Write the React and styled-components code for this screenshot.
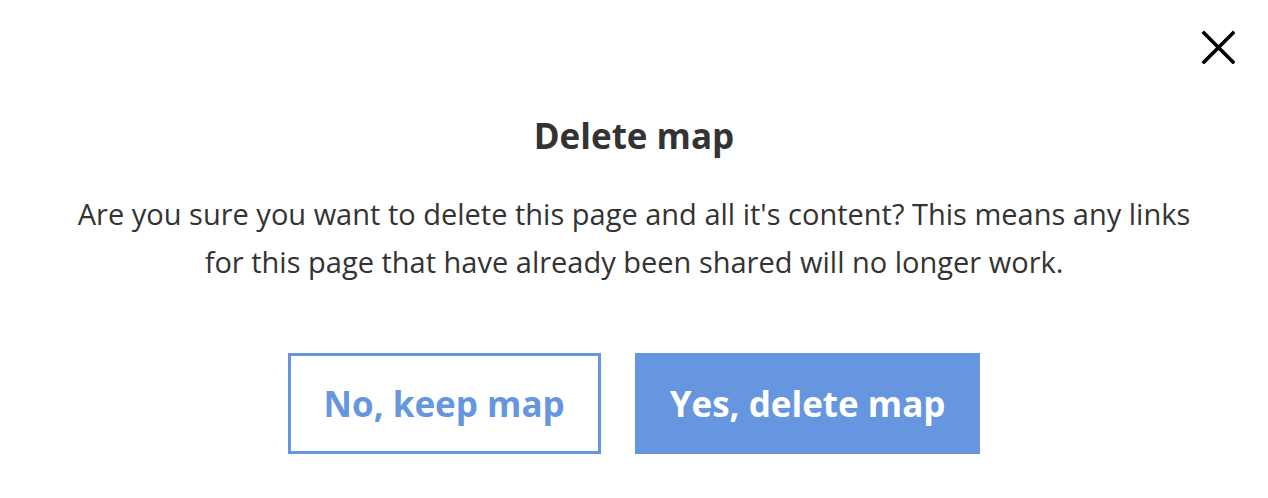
import React from 'react'
import styled, { createGlobalStyle } from 'styled-components'

const GlobalStyle = createGlobalStyle`
  html, body {
    margin: 0;
    padding: 0;
    background: #ffffff;
  }
  body {
    font-family: "Open Sans", Lato, sans-serif;
  }
`;

const App = () => {
  return (
    <>
      <GlobalStyle />
      <Modal>
        <Close aria-label="Close">
          <svg width="34" height="34" viewBox="0 0 34 34">
            <path d="M3 3 L32 32 M32 3 L3 32" stroke="#000" strokeWidth="3.6" strokeLinecap="square" />
          </svg>
        </Close>
        <Title>Delete map</Title>
        <Message>
          Are you sure you want to delete this page and all it's content? This means any links
          <br />
          for this page that have already been shared will no longer work.
        </Message>
        <Actions>
          <Button variant="outline">No, keep map</Button>
          <Button variant="solid">Yes, delete map</Button>
        </Actions>
      </Modal>
    </>
  )
}

const Modal = styled.div`
  position: relative;
  width: 1268px;
  height: 498px;
  box-sizing: border-box;
  padding-top: 110px;
  display: flex;
  flex-direction: column;
  align-items: center;
  color: #333333;
`;

const Close = styled.button`
  position: absolute;
  top: 30px;
  right: 33px;
  width: 34px;
  height: 34px;
  padding: 0;
  border: none;
  background: transparent;
  display: flex;
  align-items: center;
  justify-content: center;
  cursor: pointer;
`;

const Title = styled.h2`
  margin: 0;
  font-size: 35px;
  line-height: 52px;
  font-weight: 700;
  color: #333333;
`;

const Message = styled.p`
  margin: 28px 0 0;
  font-size: 29px;
  line-height: 48px;
  text-align: center;
  color: #333333;
`;

const Actions = styled.div`
  margin-top: 67px;
  display: flex;
  gap: 34px;
`;

const Button = styled.button`
  height: 101px;
  box-sizing: border-box;
  padding: 0 ${p => (p.variant === 'solid' ? '32px' : '33px')};
  font-family: "Open Sans", Lato, sans-serif;
  font-size: 35px;
  font-weight: 700;
  border: 3px solid #6596df;
  border-radius: 0;
  cursor: pointer;
  background: ${p => (p.variant === 'solid' ? '#6596df' : '#ffffff')};
  color: ${p => (p.variant === 'solid' ? '#ffffff' : '#6596df')};
`;

export default App;
